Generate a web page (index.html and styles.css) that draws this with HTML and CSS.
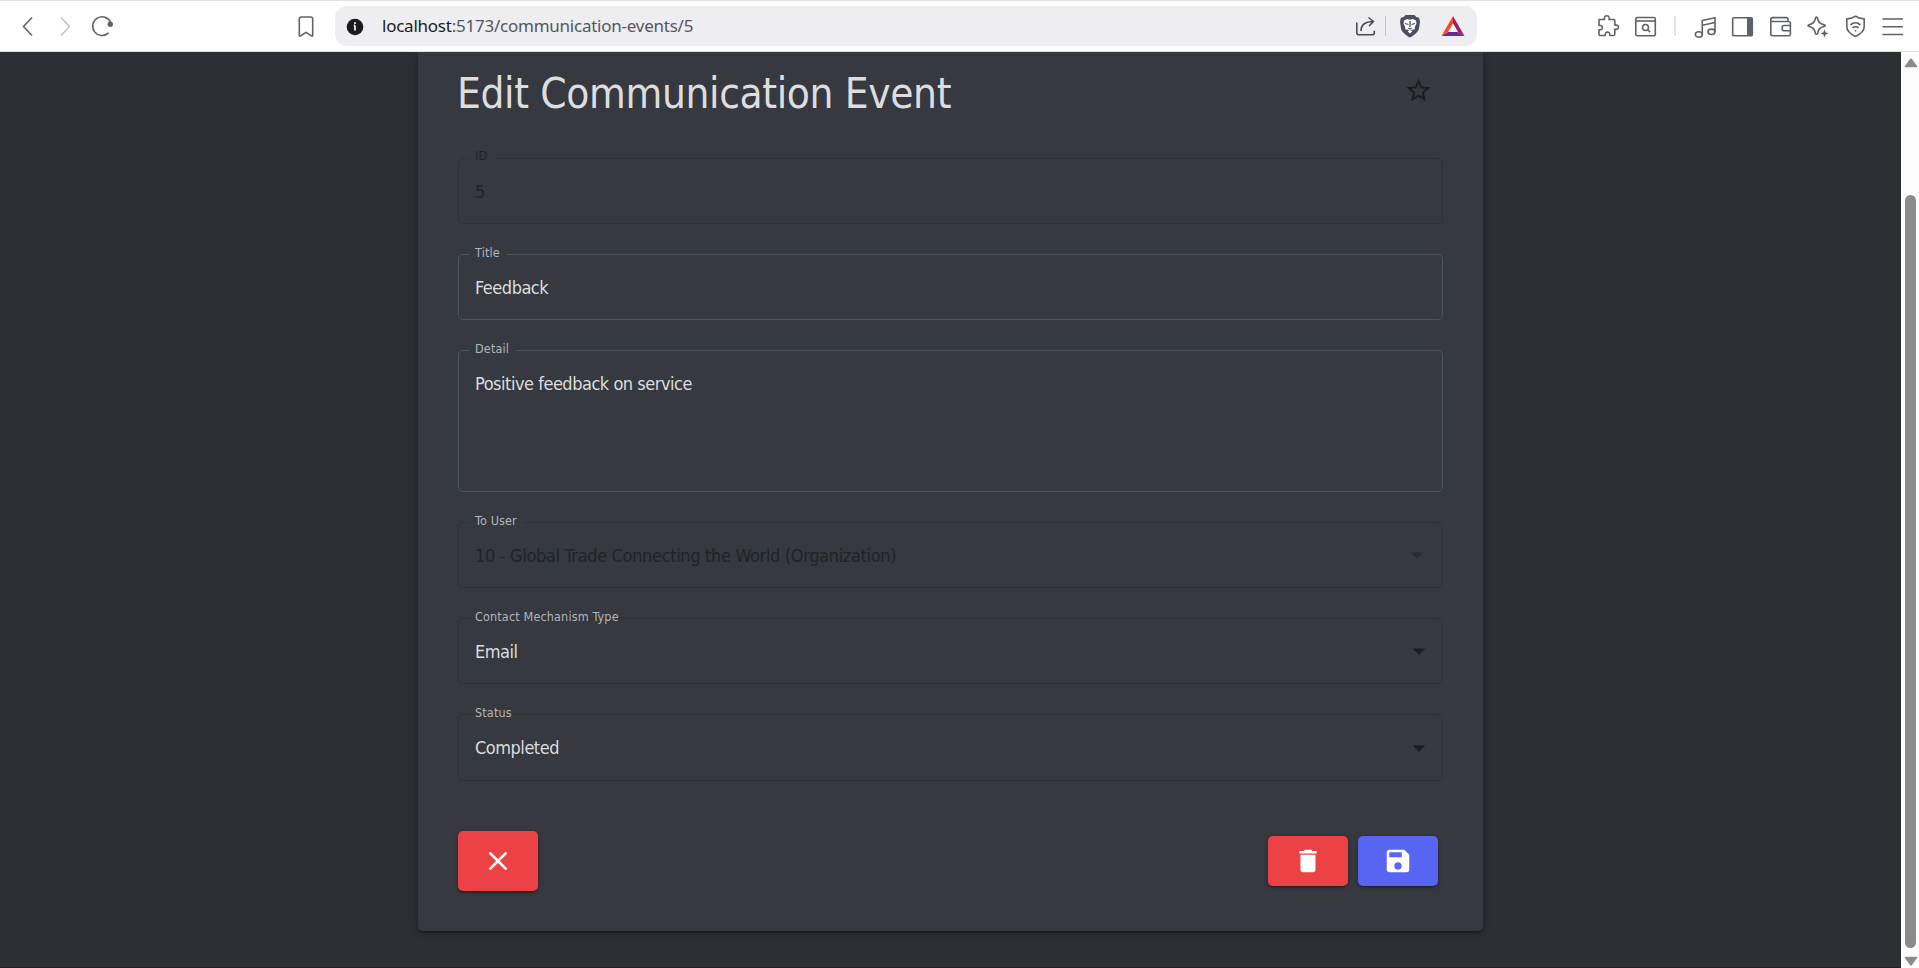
FILE: index.html
```html
<!DOCTYPE html>
<html lang="en">
<head>
<meta charset="utf-8">
<title>Edit Communication Event</title>
<link rel="stylesheet" href="styles.css">
</head>
<body>
<header class="toolbar">
  <svg class="ico" viewBox="0 0 24 24"><path d="M16 3.5 7.5 12.5 16 21.5"/></svg>
  <svg class="ico faded gap13" viewBox="0 0 24 24"><path d="M8 3.5 16.5 12.5 8 21.5"/></svg>
  <svg class="ico gap13" viewBox="0 0 24 24"><path d="M20.6 8.2A9.4 9.4 0 1 0 18.6 18.9"/><circle class="solid" cx="20.3" cy="10.3" r="2.7"/></svg>
  <svg class="ico bookmark" viewBox="0 0 24 24"><path d="M7.2 3h9.6c1.1 0 1.9.8 1.9 1.9v16.4c0 .8-.7 1-1.2.6L12 18.3l-5.5 3.600c-.5.4-1.2.2-1.2-.6V4.900c0-1.100.8-1.900 1.900-1.900z"/></svg>
  <div class="address">
    <svg class="ico info" viewBox="0 0 24 24"><circle cx="12" cy="13" r="8.300"/><path d="M12 11.500v5M10.800 11.500H12M12 8.300v1.600"/></svg>
    <span class="url"><b>localhost</b>:5173/communication-events/5</span>
    <svg class="ico share" viewBox="0 0 24 24"><path d="M2.800 8.500v10.300c0 1.300.7 2 2 2h13.500c1.300 0 2-.7 2-2v-2M7 17c0-6 4-9.500 12.500-9.500M14.500 3.500l5 4-4.500 4.500"/></svg>
    <i class="sep"></i>
    <svg class="ico lion" viewBox="0 0 24 24"><path class="mane" d="M7.500 1h9l2 2.200 2.500.2 1 4-1 7c-.6 3-5 7-9 9.200-4-2.200-8.400-6.200-9-9.200l-1-7 1-4 2.500-.2z"/><path class="face" d="M6 6.500 9 5l3 .8L15 5l3 1.500.5 3-1.800 3.800.3 2L12.800 16l1.500 1.500L12 19.500l-2.300-2 1.500-1.500L7 15.300l.3-2L5.500 9.500z"/><path class="marks" d="M7 9.500l3.500 1M17 9.500l-3.500 1M12 7v6M10.300 14l1.700 1 1.700-1"/></svg>
    <svg class="ico bat" viewBox="0 0 24 24"><path fill="#ff4724" d="M12 2 .5 22l7.300-4.200L12 10z"/><path fill="#9e1f63" d="M12 2l11.500 20-7.300-4.200L12 10z"/><path fill="#662d91" d="M.5 22h23l-7.300-4.200H7.800z"/><path fill="#fff" d="M12 9.500l5 8.500H7z"/></svg>
  </div>
  <svg class="ico puzzle" viewBox="0 0 24 24"><path d="M3 5.500h5.500c-.6-2.700.7-3.700 2.300-3.700s2.900 1 2.300 3.700h4.400c.8 0 1.300.5 1.300 1.300v4.400c2.700-.6 3.700.7 3.700 2s-1 2.600-3.700 2v5c0 .8-.5 1.300-1.300 1.300h-3.700c.2-2.400-.7-3.400-2.300-3.400s-2.500 1-2.300 3.400H4.300c-.8 0-1.300-.5-1.300-1.300v-4.400c2.400.2 3.400-.8 3.400-2.200S5.400 11.200 3 11.400z"/></svg>
  <svg class="ico gap14" viewBox="0 0 24 24"><rect x="1.800" y="3.500" width="19.500" height="18.300" rx="1.500"/><path d="M2 7h19"/><circle cx="11.500" cy="13.500" r="3"/><path d="M13.700 15.700l2.500 2.500"/></svg>
  <i class="sep light"></i>
  <svg class="ico music" viewBox="0 0 24 24"><ellipse cx="4.800" cy="20.500" rx="3.500" ry="2.700"/><ellipse cx="17.500" cy="17.800" rx="3.500" ry="2.700"/><path d="M8.300 20.500V6.500L21 3.800v14M8.300 11.200 21 8.500"/></svg>
  <svg class="ico gap13" viewBox="0 0 24 24"><rect x="1.700" y="3.700" width="19.600" height="18" rx="1"/><path class="solid" d="M16 4h5v17.500h-5z"/></svg>
  <svg class="ico gap14" viewBox="0 0 24 24"><path d="M19 7.500V5.500c0-1.100-.8-1.900-1.900-1.900H3.500c-1 0-1.700.7-1.700 1.700v14.800c0 1 .7 1.700 1.700 1.700h16.200c1 0 1.700-.7 1.700-1.700V9.200c0-1-.7-1.700-1.700-1.700H2M21.400 11.500h-6.200c-1.100 0-2 .8-2 2v1.200c0 1.100.9 2 2 2h6.200"/></svg>
  <svg class="ico gap13" viewBox="0 0 24 24"><path d="M10.500 3c.5 0 .9.400 1 1 .7 4 1.600 5.300 7 6.900.8.300.8 1.200 0 1.400-5.200 1.500-6 3-7 7.200-.3 1-1.700 1-2 0-1-4.200-2-5.700-6.800-7.200-.8-.2-.8-1.100 0-1.400C7.500 9.300 8.700 8 9.500 4c.1-.6.500-1 1-1z"/><path class="solid" d="M18.500 15.300l1.100 3 3 1.100-3 1.100-1.100 3-1.100-3-3-1.100 3-1.100z"/></svg>
  <svg class="ico gap14" viewBox="0 0 24 24"><path d="M11.500 2.200c2.500 2 5.500 2.500 8.700 2.700v7.600c0 5-4.500 8-8.700 9.900-4.200-1.900-8.700-4.900-8.700-9.900V4.900c3.200-.2 6.200-.7 8.700-2.700z"/><path d="M6.500 10.800c3-2.700 7-2.700 10 0M8.500 13.900c2-1.600 4-1.600 6 0M10.700 16.700h1.600"/></svg>
  <svg class="ico gap13" viewBox="0 0 24 24"><path d="M1.500 5h20.500M1.500 12.700h20.500M1.500 20.500h20.500"/></svg>
</header>
<div class="viewport">
  <main class="page">
    <form class="card">
      <div class="head">
        <h1>Edit Communication Event</h1>
        <svg class="fav" viewBox="0 0 24 24"><path d="M22 9.240l-7.190-.620L12 2 9.190 8.630 2 9.240l5.460 4.730L5.820 21 12 17.270 18.180 21l-1.630-7.030L22 9.240zM12 15.400l-3.760 2.270 1-4.280-3.320-2.880 4.380-.38L12 6.100l1.710 4.040 4.380.38-3.320 2.880 1 4.280L12 15.400z"/></svg>
      </div>
      <div class="field off id"><label>ID</label><span>5</span></div>
      <div class="field on"><label>Title</label><span>Feedback</span></div>
      <div class="field on area"><label>Detail</label><span>Positive feedback on service</span></div>
      <div class="field off user"><label>To User</label><span>10 - Global Trade Connecting the World (Organization)</span><svg class="drop" viewBox="0 0 24 24"><path d="M7 10l5 5 5-5z"/></svg></div>
      <div class="field select"><label>Contact Mechanism Type</label><span>Email</span><svg class="drop" viewBox="0 0 24 24"><path d="M7 10l5 5 5-5z"/></svg></div>
      <div class="field select last"><label>Status</label><span>Completed</span><svg class="drop" viewBox="0 0 24 24"><path d="M7 10l5 5 5-5z"/></svg></div>
      <div class="actions">
        <button type="button" class="btn red tall"><svg viewBox="0 0 24 24"><path class="cross" d="M5.900 5.900l12.200 12.200M18.100 5.900L5.900 18.100"/></svg></button>
        <button type="button" class="btn red push"><svg viewBox="0 0 24 24"><path d="M6 19c0 1.100.9 2 2 2h8c1.100 0 2-.9 2-2V7H6v12zM19 4h-3.500l-1-1h-5l-1 1H5v2h14V4z"/></svg></button>
        <button type="button" class="btn blue"><svg viewBox="0 0 24 24"><path d="M17 3H5c-1.110 0-2 .9-2 2v14c0 1.100.89 2 2 2h14c1.100 0 2-.9 2-2V7l-4-4zm-5 16c-1.660 0-3-1.340-3-3s1.340-3 3-3 3 1.340 3 3-1.340 3-3 3zm3-10H5V5h10v4z"/></svg></button>
      </div>
    </form>
  </main>
  <div class="scrollbar">
    <svg class="tip" viewBox="0 0 14 10"><path d="M7 1.500 12.500 9h-11z"/></svg>
    <div class="thumb"></div>
    <svg class="tip" viewBox="0 0 14 10"><path d="M7 8.500 1.500 1h11z"/></svg>
  </div>
</div>
</body>
</html>
```
FILE: styles.css
```css
* { box-sizing: border-box; }
html, body { margin: 0; height: 100%; overflow: hidden; }
body { display: flex; flex-direction: column; background: #fff; font-family: "DejaVu Sans Condensed", "Noto Sans", sans-serif; }

.toolbar { display: flex; align-items: center; height: 52px; padding: 0 0 0 16px; border-top: 1px solid #e0e0e6; border-bottom: 1px solid #e0e1e5; background: #fff; flex: none; }
.ico { width: 24px; height: 24px; flex: none; fill: none; stroke: #5f6368; stroke-width: 1.6; stroke-linejoin: round; }
.ico .solid { fill: #5f6368; stroke: none; }
.faded { stroke: #bfc1c5; }
.gap13 { margin-left: 13px; }
.gap14 { margin-left: 14px; }
.bookmark { margin-left: 180px; }
.address { display: flex; align-items: center; width: 1142px; height: 40px; margin-left: 17px; padding: 0 11px 0 8px; border-radius: 12px; background: #ededf2; flex: none; }
.info { fill: #1c1c20; stroke: none; }
.info path { stroke: #ededf2; stroke-width: 1.8; stroke-linejoin: miter; }
.url { margin: 0 0 1px 15px; font: 17px/26px "Noto Sans", sans-serif; letter-spacing: -0.24px; color: #55565c; white-space: nowrap; }
.url b { font-weight: 400; color: #1c1c20; }
.share { margin-left: auto; stroke: #4a4b52; }
.sep { width: 1px; height: 20px; margin: 0 12px 0 7px; background: #c5c5cd; flex: none; }
.sep.light { width: 2px; margin: 0 0 0 16px; background: #e2e2ea; }
.lion .mane { fill: #4d4f61; stroke: none; }
.lion .face { fill: #fff; stroke: none; }
.lion .marks { stroke: #4d4f61; stroke-width: 1.3; }
.bat { margin-left: 19px; stroke: none; }
.address .bat { margin-right: 1px; }
.puzzle { margin-left: 119px; }
.music { margin-left: 18px; }

.viewport { display: flex; flex: 1; min-height: 0; }
.page { display: flex; flex: 1; justify-content: center; align-items: flex-start; background: #2c2f33; border-bottom: 1px solid #2a2023; overflow: hidden; }
.card { width: 1065px; height: 879px; margin: 0; padding: 0 40px; border-radius: 0 0 5px 5px; background: #36393f; box-shadow: 0 3px 1px -2px rgba(0,0,0,.2), 0 2px 2px rgba(0,0,0,.14), 0 1px 8px rgba(0,0,0,.3); }
.head { display: flex; justify-content: space-between; height: 106px; padding-right: 10px; }
h1 { margin: 15px 0 0 -1px; font-size: 42px; line-height: 54px; font-weight: 400; letter-spacing: -0.38px; color: #dcddde; white-space: nowrap; }
.fav { width: 29px; height: 29px; margin-top: 24px; fill: #1b1c20; }

.field { position: relative; height: 66px; margin-bottom: 30px; padding: 20px 16px; border: 1px solid #2f3134; border-radius: 5px; font-size: 18px; line-height: 26px; letter-spacing: -0.48px; color: #dcddde; white-space: nowrap; }
.field.on { border-color: #4f545c; }
.field.off { color: #212327; letter-spacing: -0.34px; }
.field.area { height: 142px; }
.field.last { height: 67px; margin-bottom: 0; }
.field label { position: absolute; left: 10px; top: -11px; padding: 0 7px 0 6px; font-size: 12.500px; line-height: 18px; letter-spacing: 0.15px; color: #b3b5b8; background: #36393f; }
.field.off label { color: #212327; }
.field.id label { top: -12px; }
.field.user label { color: #b3b5b8; }
.field.select label { background: none; }
.drop { position: absolute; right: 8px; top: 17px; width: 30px; height: 30px; fill: #1b1c20; }
.user .drop { right: 10px; fill: #292b2f; }
.last .drop { top: 18px; }

.actions { display: flex; align-items: center; gap: 10px; margin-top: 50px; padding-right: 5px; }
.btn { display: flex; align-items: center; justify-content: center; width: 80px; height: 50px; padding: 0; border: 0; border-radius: 5px; box-shadow: 0 3px 1px -2px rgba(0,0,0,.2), 0 2px 2px rgba(0,0,0,.14), 0 1px 5px rgba(0,0,0,.22); }
.btn svg { width: 30px; height: 30px; fill: #fff; }
.tall { height: 60px; }
.push { margin-left: auto; }
.red { background: #ed4245; }
.blue { background: #5865f2; }
.cross { stroke: #fff; stroke-width: 2.2; stroke-linecap: round; }

.scrollbar { display: flex; flex-direction: column; align-items: center; width: 18px; padding: 5px 0 1px 1px; background: #fcfcfc; flex: none; }
.tip { width: 14px; height: 11px; fill: #8b8b8b; stroke: #8b8b8b; stroke-width: 1.500; stroke-linejoin: round; flex: none; }
.thumb { width: 11px; height: 753px; margin: 127px 0 auto; border-radius: 6px; background: #8b8b8b; flex: none; }
```
